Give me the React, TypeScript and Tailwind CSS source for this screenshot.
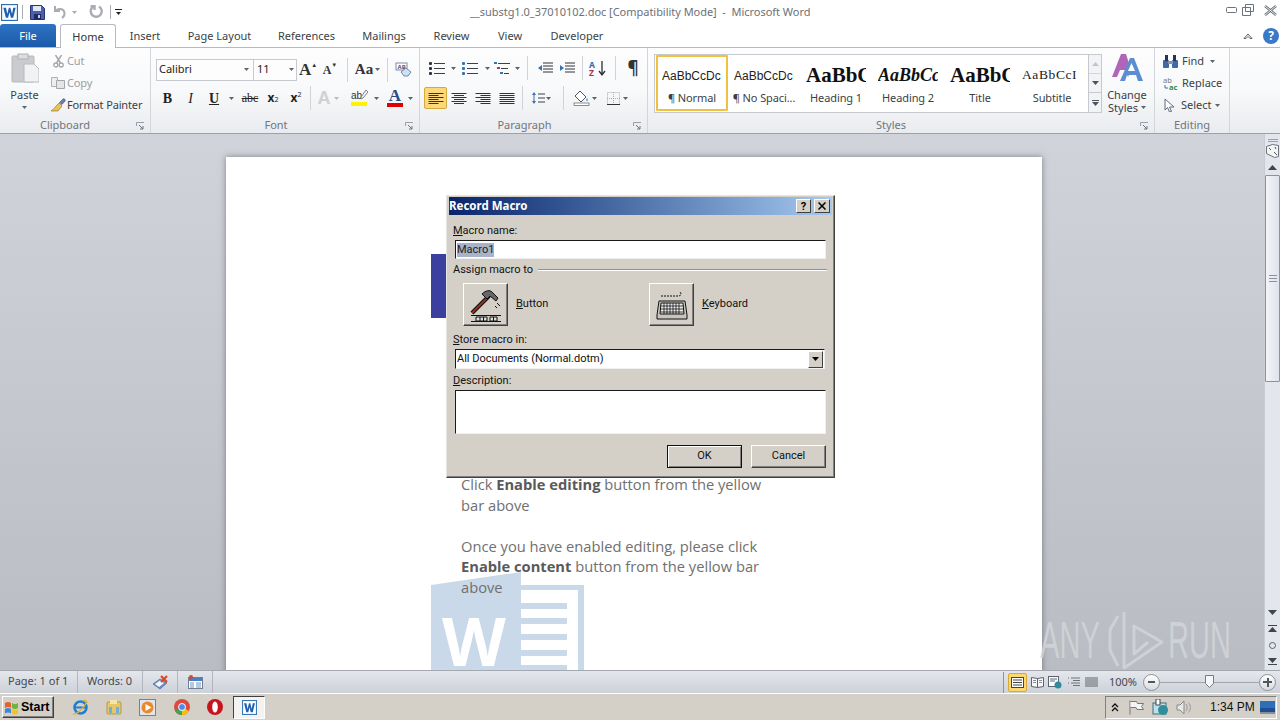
import React from "react";

const Caret = ({ c = "#5c6370" }: { c?: string }) => (
  <svg width="5" height="3" viewBox="0 0 5 3" className="shrink-0"><path d="M0 0h5L2.5 3z" fill={c} /></svg>
);

const Cell = ({ w, children, className = "" }: { w: number; children?: React.ReactNode; className?: string }) => (
  <div style={{ width: w }} className={`flex shrink-0 items-center justify-center h-[22px] ${className}`}>{children}</div>
);

const VDiv = ({ h = 24 }: { h?: number }) => <div style={{ height: h }} className="w-px bg-[#d0d3d9] shrink-0" />;

const Launcher = () => (
  <svg width="9" height="9" viewBox="0 0 9 9" className="shrink-0">
    <path d="M.5 4V.5H8" fill="none" stroke="#9aa0a8" />
    <path d="M3 3l4 4M7 4v3H4" fill="none" stroke="#6b7480" />
  </svg>
);

const Group = ({ w, label, children, labelPad = 0 }: { w: number; label: string; children: React.ReactNode; labelPad?: number }) => (
  <div style={{ width: w }} className="relative shrink-0 h-[85px] flex flex-col border-r border-[#d2d5da]">
    <div className="h-[69px] flex flex-col">{children}</div>
    <div className="h-[15px] flex items-center justify-center text-[#6f7680] text-[11px] leading-none" style={{ paddingRight: labelPad }}>
      {label}
    </div>
    <div className="absolute right-[5px] bottom-[2px]"><Launcher /></div>
  </div>
);

const Lines = ({ kind }: { kind: "l" | "c" | "r" | "j" }) => {
  const rows = [0, 1, 2, 3, 4, 5];
  return (
    <svg width="16" height="13" viewBox="0 0 16 13">
      {rows.map((i) => {
        const short = i % 2 === 1;
        const w = kind === "j" ? 15 : short ? 10 : 15;
        const x = kind === "l" || kind === "j" ? 0.5 : kind === "c" ? (16 - w) / 2 : 15.5 - w;
        return <rect key={i} x={x} y={i * 2 + 1} width={w} height="1" fill="#30343a" />;
      })}
    </svg>
  );
};

const ListIcon = ({ n }: { n?: boolean }) => (
  <svg width="16" height="14" viewBox="0 0 16 14">
    {[2, 7, 12].map((y) => (
      <g key={y}>
        <rect x="0" y={y - 1} width="3" height="3" fill={n ? "#3a6fb5" : "#2a3240"} rx="1" />
        <rect x="5" y={y} width="11" height="1" fill="#3c4048" />
      </g>
    ))}
  </svg>
);

const WordIcon = ({ s = 16 }: { s?: number }) => (
  <svg width={s} height={s} viewBox="0 0 16 16">
    <rect x=".5" y=".5" width="15" height="15" fill="#e6f0fa" stroke="#2f6fb5" />
    <rect x="2" y="2" width="12" height="12" fill="#fff" />
    <path d="M2.2 3.5h2.5l1.2 6 1.5-6h1.4l1.6 6 1.1-6h2.3l-2.3 9.5H9.3L8 7.7 6.7 13H4.6z" fill="#1f5fb0" />
  </svg>
);

const TitleBar = () => (
  <div className="h-[24px] flex items-center relative bg-white shrink-0">
    <div className="flex items-center pl-[1px] h-full">
      <WordIcon s={17} />
      <div className="w-px h-[14px] bg-[#a8acb2] ml-[4px]" />
      <svg width="15" height="15" viewBox="0 0 15 15" className="ml-[7px]">
        <path d="M.5.5h11l3 3v11H.5z" fill="#4a5fb0" stroke="#27346f" />
        <rect x="3" y="1" width="8" height="5" fill="#dfe6f5" />
        <rect x="4" y="9" width="7" height="5.5" fill="#20285f" />
        <rect x="8" y="10" width="2" height="3" fill="#c8d0e6" />
      </svg>
      <svg width="14" height="14" viewBox="0 0 14 14" className="ml-[8px]">
        <path d="M2 1v5h5M2.5 6C5 3 11 3 11.5 8c.2 2-1 4-2.500 5" fill="none" stroke="#a9adb3" strokeWidth="2" />
      </svg>
      <div className="ml-[5px]"><Caret c="#a9adb3" /></div>
      <svg width="14" height="14" viewBox="0 0 14 14" className="ml-[12px]">
        <path d="M10 1.500A5.500 5.500 0 1 1 4 1.800M1.500 1h4v4" fill="none" stroke="#a9adb3" strokeWidth="2.400" />
      </svg>
      <div className="w-px h-[14px] bg-[#a8acb2] ml-[7px]" />
      <div className="ml-[4px] flex flex-col items-center gap-[2px]">
        <div className="w-[7px] h-px bg-[#222]" />
        <Caret c="#222" />
      </div>
    </div>
    <div className="absolute left-[470px] top-[3px] text-[11px] leading-[18px] tracking-[-0.03px] text-[#6c7178] whitespace-pre">
      __substg1.0_37010102.doc [Compatibility Mode]  -  Microsoft Word
    </div>
    <div className="ml-auto pr-[3px] flex items-center gap-[5px] -mt-[4px]">
      <svg width="11" height="6" viewBox="0 0 11 6"><rect x=".5" y=".5" width="10" height="5" rx="1" fill="#fff" stroke="#6d737c" /></svg>
      <svg width="12" height="12" viewBox="0 0 12 12"><path d="M3.500.5h8v7h-8zM.5 3.500h8v8h-8z" fill="#fff" stroke="#6d737c" /></svg>
      <svg width="13" height="11" viewBox="0 0 13 11" className="ml-[5px]"><path d="M1 1l11 9M12 1L1 10" stroke="#6d737c" strokeWidth="2.500" /><path d="M1 1l11 9M12 1L1 10" stroke="#fff" strokeWidth=".8" /></svg>
    </div>
  </div>
);

const Tab = ({ w, children }: { w: number; children: string }) => (
  <div style={{ width: w }} className="shrink-0 text-center text-[11px] text-[#3b3f45] leading-[23px]">{children}</div>
);

const Tabs = () => (
  <div className="h-[23px] flex items-end bg-white shrink-0 relative">
    <div className="w-[56px] h-[23px] rounded-t-[3px] bg-gradient-to-b from-[#2f73c4] to-[#1a5aa8] text-white text-[11px] text-center leading-[23px]">File</div>
    <div className="w-[56px] h-[24px] ml-[4px] -mb-px relative z-10 bg-white border border-b-0 border-[#b6bac0] rounded-t-[3px] text-center text-[11px] text-[#333] leading-[23px]">Home</div>
    <Tab w={58}>Insert</Tab>
    <Tab w={91}>Page Layout</Tab>
    <Tab w={83}>References</Tab>
    <Tab w={72}>Mailings</Tab>
    <Tab w={63}>Review</Tab>
    <Tab w={54}>View</Tab>
    <Tab w={80}>Developer</Tab>
    <div className="ml-auto pr-[1px] flex items-center gap-[10px] h-[23px]">
      <svg width="10" height="8" viewBox="0 0 10 8"><path d="M1 6.500l4-4.500 4 4.500H7L5 4.500 3 6.500z" fill="#fff" stroke="#5a6068" /></svg>
      <div className="w-[16px] h-[16px] rounded-full bg-[#3a78c8] text-white text-[12px] font-bold leading-[16px] text-center">?</div>
    </div>
  </div>
);

const Clipboard = () => (
  <Group w={151} label="Clipboard" labelPad={20}>
    <div className="flex pt-[5px]">
      <div className="w-[49px] flex flex-col items-center">
        <svg width="28" height="30" viewBox="0 0 28 30">
          <rect x="1" y="3" width="22" height="26" rx="1" fill="#c9cbce" stroke="#b6b8bb" />
          <rect x="7" y="1" width="10" height="5" fill="#dcdde0" stroke="#b0b2b6" />
          <path d="M13 11h10l5 5v13H13z" fill="#f1f2f3" stroke="#b8babd" />
        </svg>
        <div className="text-[11px] leading-[14px] mt-[5px] text-[#3b3f45]">Paste</div>
        <div className="mt-[4px]"><Caret /></div>
      </div>
      <div className="flex flex-col -mt-[3px] text-[11px] text-[#3b3f45]">
        {[
          { t: "Cut", gray: true, i: <svg width="11" height="13" viewBox="0 0 11 13"><path d="M2.500 0l5 8M8.500 0l-5 8" stroke="#a4a6aa" strokeWidth="1.500" /><circle cx="2.800" cy="10" r="2" fill="none" stroke="#a4a6aa" strokeWidth="1.300" /><circle cx="8.200" cy="10" r="2" fill="none" stroke="#a4a6aa" strokeWidth="1.300" /></svg> },
          { t: "Copy", gray: true, i: <svg width="14" height="12" viewBox="0 0 14 12"><path d="M.5.500h6v9h-6z" fill="#eee" stroke="#aeb0b4" /><path d="M5.500 3.500h8v8h-8z" fill="#e4e5e7" stroke="#a4a6aa" /></svg> },
          { t: "Format Painter", gray: false, i: <svg width="16" height="14" viewBox="0 0 16 14"><path d="M9 5l3 3-4 5-7 0c2-1 4-4 8-8z" fill="#e8c25a" stroke="#8a6a20" strokeWidth=".6" /><path d="M9.500 4.500L13 1c1-1 3 1 2 2l-3 3.500z" fill="#6a7db0" stroke="#3a4a70" strokeWidth=".6" /></svg> },
        ].map((r) => (
          <div key={r.t} className="h-[22px] flex items-center">
            <div className="w-[18px] flex justify-center">{r.i}</div>
            <span className={`tracking-[-0.15px] ${r.gray ? "text-[#9b9ea3]" : ""}`}>{r.t}</span>
          </div>
        ))}
      </div>
    </div>
  </Group>
);

const Serif = "font-['Liberation_Serif',serif]";

const Font = () => (
  <Group w={269} label="Font" labelPad={18}>
    <div className="flex items-center pt-[11px] pl-[5px] h-[32px]">
      <div className="w-[98px] h-[22px] border border-[#c6cad0] bg-[#fdfdfd] flex items-center justify-between pl-[2px] pr-[4px] text-[11px] text-[#222]"><span>Calibri</span><Caret /></div>
      <div className="w-[43px] h-[22px] border border-l-0 border-[#c6cad0] bg-[#fdfdfd] flex items-center justify-between pl-[3px] pr-[2px] text-[11px] text-[#222]"><span>11</span><Caret /></div>
      <Cell w={22} className={`${Serif} font-bold text-[17px] text-[#333]`}>A<span className="text-[6px] -mt-[8px]">▲</span></Cell>
      <Cell w={22} className={`${Serif} font-bold text-[12px] text-[#333]`}>A<span className="text-[6px] -mt-[8px]">▼</span></Cell>
      <div className="w-[6px]" />
      <VDiv />
      <Cell w={39} className={`${Serif} font-bold text-[15px] text-[#333] gap-[2px]`}>Aa<Caret /></Cell>
      <VDiv />
      <Cell w={30}>
        <svg width="17" height="15" viewBox="0 0 17 15"><rect x="1" y="1" width="11" height="7" fill="#fff" stroke="#7d8ba0" /><text x="2.500" y="7" fontSize="6" fontWeight="700" fill="#3a5a8a">AB</text><path d="M6 10l5-4 5 4-3 4H9z" fill="#cfe0f2" stroke="#6a8ab0" /></svg>
      </Cell>
    </div>
    <div className="flex items-center pt-[6px] pl-[5px] text-[#222]">
      <Cell w={23} className={`${Serif} font-bold text-[14px]`}>B</Cell>
      <Cell w={23} className={`${Serif} italic text-[14px]`}>I</Cell>
      <Cell w={24} className={`${Serif} font-bold text-[14px] underline`}>U</Cell>
      <Cell w={10}><Caret /></Cell>
      <Cell w={28} className={`${Serif} text-[12px] line-through`}>abc</Cell>
      <Cell w={18} className="font-bold text-[12px]">x<sub className="text-[7px] font-normal">2</sub></Cell>
      <Cell w={28} className="font-bold text-[12px]">x<sup className="text-[7px] font-normal">2</sup></Cell>
      <VDiv />
      <Cell w={34} className="gap-[3px] font-bold text-[18px] text-[#cfd1d4] font-['Liberation_Sans',sans-serif]">A<Caret c="#b8bbbf" /></Cell>
      <Cell w={28} className="relative">
        <div className="flex flex-col items-start w-[16px] relative">
          <span className="text-[10px] text-[#333] leading-[11px] font-['Liberation_Sans',sans-serif]">ab</span>
          <svg className="absolute left-[9px] top-0" width="8" height="10" viewBox="0 0 8 10"><path d="M6 0l2 2-5 6-2 1 0-2z" fill="#f2f2f2" stroke="#5d6a7c" strokeWidth=".8" /></svg>
          <div className="w-[16px] h-[4px] bg-[#fff200] mt-[1px]" />
        </div>
      </Cell>
      <Cell w={6}><Caret /></Cell>
      <div className="w-[4px]" />
      <Cell w={24}>
        <div className="flex flex-col items-center">
          <span className={`${Serif} font-bold text-[17px] leading-[13px] text-[#2a4a88]`}>A</span>
          <div className="w-[16px] h-[4px] bg-[#e00000] mt-[1px]" />
        </div>
      </Cell>
      <Cell w={6}><Caret /></Cell>
    </div>
  </Group>
);

const Paragraph = () => (
  <Group w={228} label="Paragraph" labelPad={18}>
    <div className="flex items-center pt-[9px] pl-[5px] text-[#222]">
      <Cell w={24}><ListIcon /></Cell>
      <Cell w={8}><Caret /></Cell>
      <Cell w={26}><ListIcon n /></Cell>
      <Cell w={8}><Caret /></Cell>
      <Cell w={22}>
        <svg width="16" height="14" viewBox="0 0 16 14"><rect x="0" y="1" width="3" height="2" fill="#3a6fb5" /><rect x="4" y="2" width="12" height="1" fill="#3c4048" /><rect x="3" y="6" width="3" height="2" fill="#a04050" /><rect x="7" y="7" width="7" height="1" fill="#3c4048" /><rect x="6" y="11" width="3" height="2" fill="#3a6fb5" /><rect x="10" y="12" width="5" height="1" fill="#3c4048" /></svg>
      </Cell>
      <Cell w={8}><Caret /></Cell>
      <Cell w={13}><VDiv /></Cell>
      <Cell w={22}><svg width="16" height="13" viewBox="0 0 16 13"><path d="M6 1h10M6 4h10M6 7h10M6 10h10" stroke="#2f333a" /><path d="M5 3L1 6l4 3z" fill="#3a6fb5" /></svg></Cell>
      <Cell w={22}><svg width="16" height="13" viewBox="0 0 16 13"><path d="M6 1h10M6 4h10M6 7h10M6 10h10" stroke="#2f333a" /><path d="M1 3l4 3-4 3z" fill="#3a6fb5" /></svg></Cell>
      <Cell w={9}><VDiv /></Cell>
      <Cell w={22}><svg width="18" height="17" viewBox="0 0 18 17"><text x="0" y="7.500" fontSize="8.500" fontWeight="700" fill="#2b6cb5">A</text><text x="0" y="16" fontSize="8.500" fontWeight="700" fill="#b5303a">Z</text><path d="M13 1v13M10 11l3 4 3-4" fill="none" stroke="#2a2e35" strokeWidth="1.300" /></svg></Cell>
      <Cell w={12}><VDiv /></Cell>
      <Cell w={24} className="text-[17px] font-bold text-[#333]">¶</Cell>
    </div>
    <div className="flex items-center pt-[8px] pl-[4px]">
      <Cell w={23} className="bg-[#fcd87c] border border-[#d6a93a] rounded-[2px]"><Lines kind="l" /></Cell>
      <Cell w={24}><Lines kind="c" /></Cell>
      <Cell w={24}><Lines kind="r" /></Cell>
      <Cell w={23}><Lines kind="j" /></Cell>
      <Cell w={8}><VDiv /></Cell>
      <Cell w={30} className="gap-[1px]">
        <svg width="14" height="14" viewBox="0 0 14 14"><path d="M3 3v8" stroke="#3a6fb5" /><path d="M1 4l2-3 2 3zM1 10l2 3 2-3z" fill="#3a6fb5" /><path d="M7 3h7M7 7h7M7 11h7" stroke="#3c4048" /></svg><Caret />
      </Cell>
      <Cell w={14}><VDiv /></Cell>
      <Cell w={30} className="gap-[2px]">
        <svg width="17" height="16" viewBox="0 0 17 16"><path d="M7 1l6 6-5 5-6-6z" fill="#fff" stroke="#4a5568" /><path d="M12 5l2 3c1 1.500 1 3 0 3s-1-1.500 0-3" fill="#3a8fd0" /><rect x="1" y="13" width="15" height="2.500" fill="#fff" stroke="#5a6068" strokeWidth=".7" /></svg><Caret />
      </Cell>
      <Cell w={3} />
      <Cell w={28} className="gap-[3px]">
        <svg width="13" height="13" viewBox="0 0 13 13"><path d="M.5.500h12v12H.5z" fill="none" stroke="#a9adb3" strokeDasharray="1 1" /><path d="M6.500 0v13M0 6.500h13" stroke="#a9adb3" strokeDasharray="1 1" /><path d="M0 12.500h13" stroke="#333" /></svg><Caret />
      </Cell>
    </div>
  </Group>
);

const StyleItem = ({ sample, label, cls, active }: { sample: string; label: string; cls: string; active?: boolean }) => (
  <div className={`w-[72px] shrink-0 h-[56px] flex flex-col items-center overflow-hidden ${active ? "border-2 border-[#f0c040] bg-white rounded-[1px]" : "border-2 border-transparent"}`}>
    <div className={`h-[37px] w-[60px] overflow-hidden whitespace-nowrap flex items-center justify-start ${cls}`}>{sample}</div>
    <div className="text-[11px] leading-[14px] -mt-[3px] tracking-[-0.1px] text-[#3b3f45] whitespace-nowrap">{label}</div>
  </div>
);

const Styles = () => (
  <Group w={507} label="Styles" labelPad={20}>
    <div className="flex pt-[6px] pl-[6px]">
      <div className="w-[448px] h-[59px] flex border border-[#c6cad0] bg-white">
        <div className="flex flex-1 pl-[1px]">
          <StyleItem active sample="AaBbCcDc" label="¶ Normal" cls="text-[12px] text-[#222] font-['Liberation_Sans',sans-serif]" />
          <StyleItem sample="AaBbCcDc" label="¶ No Spaci..." cls="text-[12px] text-[#222] font-['Liberation_Sans',sans-serif]" />
          <StyleItem sample="AaBbCc" label="Heading 1" cls={`${Serif} font-bold text-[21px] text-[#111]`} />
          <StyleItem sample="AaBbCc" label="Heading 2" cls={`${Serif} font-bold italic text-[18px] text-[#111]`} />
          <StyleItem sample="AaBbCc" label="Title" cls={`${Serif} font-bold text-[21px] text-[#111]`} />
          <StyleItem sample="AaBbCcI" label="Subtitle" cls={`${Serif} text-[13.500px] tracking-[0.6px] text-[#222]`} />
        </div>
        <div className="w-[14px] flex flex-col border-l border-[#c6cad0] bg-[#f2f3f5] ml-auto">
          <div className="h-[19px] flex items-center justify-center border-b border-[#d3d6db]"><svg width="7" height="4" viewBox="0 0 7 4"><path d="M0 4l3.500-4L7 4z" fill="#c2c5ca" /></svg></div>
          <div className="h-[19px] flex items-center justify-center border-b border-[#c6cad0]"><svg width="7" height="4" viewBox="0 0 7 4"><path d="M0 0l3.500 4L7 0z" fill="#4c5260" /></svg></div>
          <div className="h-[19px] flex flex-col items-center justify-center gap-[1px]"><div className="w-[7px] h-px bg-[#4c5260]" /><svg width="7" height="4" viewBox="0 0 7 4"><path d="M0 0l3.500 4L7 0z" fill="#4c5260" /></svg></div>
        </div>
      </div>
      <div className="w-[50px] flex flex-col items-center text-[11px] leading-[13px] text-[#3b3f45] -mt-[1px]">
        <svg width="32" height="30" viewBox="0 0 32 30">
          <path d="M1 24L10 1h5l5 16-3 7-3-7H9l-3 7z" fill="#b065b8" />
          <path d="M9 28L19 5h4l9 23h-5l-2-6h-9l-2 6z" fill="#5b8ed0" />
          <path d="M17 18h7l-3.500-8z" fill="#fff" />
        </svg>
        <div className="mt-[5px]">Change</div>
        <div className="flex items-center gap-[3px]">Styles <Caret /></div>
      </div>
    </div>
  </Group>
);

const Editing = () => (
  <div className="w-[75px] shrink-0 h-[85px] flex flex-col border-r border-[#d2d5da]">
    <div className="h-[69px] flex flex-col pt-[2px] pl-[8px] text-[11px] text-[#3b3f45]">
      <div className="h-[22px] flex items-center gap-[4px]">
        <svg width="15" height="13" viewBox="0 0 15 13"><rect x="0" y="5" width="6" height="8" rx="1" fill="#3f68a8" /><rect x="9" y="5" width="6" height="8" rx="1" fill="#3f68a8" /><rect x="2" y="0" width="3" height="6" fill="#26344f" /><rect x="10" y="0" width="3" height="6" fill="#26344f" /><rect x="5" y="6" width="5" height="3" fill="#8a93a3" /></svg>
        <span>Find</span><span className="ml-[2px]"><Caret /></span>
      </div>
      <div className="h-[22px] flex items-center gap-[4px]">
        <svg width="15" height="15" viewBox="0 0 15 15"><text x="0" y="7" fontSize="7.500" fill="#777">ab</text><text x="6" y="14" fontSize="7.500" fontWeight="700" fill="#3c8a3c">ac</text><path d="M2 9v3h3" fill="none" stroke="#3a6fb5" /></svg>
        <span>Replace</span>
      </div>
      <div className="h-[22px] flex items-center gap-[5px]">
        <svg width="13" height="14" viewBox="0 0 13 14"><path d="M2 1l9 8H6.500l2 4.500-2 .5-2-4.500L2 12z" fill="#fff" stroke="#5f6a7a" /></svg>
        <span>Select</span><span className="ml-[-2px]"><Caret /></span>
      </div>
    </div>
    <div className="h-[15px] flex items-center justify-center text-[#6f7680] text-[11px] leading-none">Editing</div>
  </div>
);

const Ribbon = () => (
  <div className="h-[87px] flex shrink-0 bg-gradient-to-b from-[#fdfdfe] via-[#f8f9fa] to-[#e9ebef] border-t border-[#b6bac0] border-b border-b-[#9ea2a8]">
    <Clipboard />
    <Font />
    <Paragraph />
    <Styles />
    <Editing />
  </div>
);

const ScrollBar = () => (
  <div className="w-[16px] shrink-0 bg-[#e3e6ec] flex flex-col items-center border-l border-[#c9ccd2]">
    <div className="h-[3px] mt-[5px] w-[10px] border-y border-[#9ca0a6]" />
    <div className="h-[18px] flex items-center">
      <svg width="13" height="14" viewBox="0 0 13 14"><path d="M.5 2.500l6 -2 6 1v11l-4 1-8-4z" fill="#f4f5f6" stroke="#6c727a" /><path d="M3 4l2 2M8 8l3 3M9 3l1 2" stroke="#555" /></svg>
    </div>
    <div className="h-[15px] flex items-center">
      <svg width="9" height="5" viewBox="0 0 9 5"><path d="M0 5l4.500-5L9 5z" fill="#3f4650" /></svg>
    </div>
    <div className="w-[15px] h-[207px] rounded-[1px] border border-[#8e929a] bg-gradient-to-r from-[#f2f4f8] to-[#dfe3ec] flex items-center justify-center">
      <div className="w-[8px] h-[7px] border-y border-[#8e929a] flex items-center"><div className="w-full h-px bg-[#8e929a]" /></div>
    </div>
    <div className="flex-1" />
    <div className="h-[14px] flex items-center"><svg width="9" height="5" viewBox="0 0 9 5"><path d="M0 0l4.500 5L9 0z" fill="#3f4650" /></svg></div>
    <div className="h-[16px] mt-[2px] flex items-center"><svg width="9" height="8" viewBox="0 0 9 8"><path d="M0 0h9v1H0zM0 7l4.500-5L9 7z" fill="#3f4650" /></svg></div>
    <div className="h-[16px] flex items-center"><div className="w-[7px] h-[7px] rounded-full border border-[#5c6370]" /></div>
    <div className="h-[16px] mb-[1px] flex items-center"><svg width="9" height="8" viewBox="0 0 9 8"><path d="M0 7h9v1H0zM0 1l4.500 5L9 1z" fill="#3f4650" /></svg></div>
  </div>
);

const Doc = () => (
  <div className="flex-1 flex min-h-0 bg-gradient-to-b from-[#d0d3d9] to-[#b9bcc2] overflow-hidden relative">
    <div className="flex-1 pl-[226px] pt-[23px] relative">
      <div className="w-[816px] h-[600px] bg-white shadow-[0_0_6px_rgba(60,60,70,0.55)] relative">
        <svg className="absolute left-[205px] top-[415px]" width="153" height="98" viewBox="0 0 153 98">
          <path d="M90 13h63v85H90z" fill="#c9d9e9" />
          <path d="M90 18h57v80H90z" fill="#fff" />
          {[31, 46, 62, 78, 93].map((y) => <rect key={y} x="90" y={y} width="46" height="6" fill="#c9d9e9" />)}
          <path d="M0 13L90 0v98H0z" fill="#c9d9e9" />
          <text x="11" y="94" fontSize="66" fontWeight="700" fill="#fff" fontFamily="Open Sans, sans-serif">W</text>
        </svg>
        <div className="pl-[205px] pt-[97px] relative">
          <div className="w-[20px] h-[64px] bg-[#3b3f9e]" />
          <div className="ml-[30px] mt-[156px] w-[320px] text-[14.700px] leading-[20.500px] text-[#707070] font-['Open_Sans',sans-serif]">
            <p>Click <b className="text-[#5a5a5a]">Enable editing</b> button from the yellow bar above</p>
            <p className="mt-[20.500px] w-[310px]">Once you have enabled editing, please click <b className="text-[#5a5a5a]">Enable content</b> button from the yellow bar above</p>
          </div>
        </div>
      </div>
    </div>
    <ScrollBar />
    <div className="absolute left-[1040px] top-[476px] h-[60px] w-[200px] text-[#d4d6da] opacity-80 font-['Liberation_Sans',sans-serif] text-[52px] leading-[60px]">
      <span className="absolute left-0 top-0 origin-left scale-x-[0.56] whitespace-nowrap">ANY</span>
      <svg className="absolute left-[64px] top-0" width="72" height="60" viewBox="0 0 72 60" fill="none" stroke="#d4d6da" strokeWidth="3">
        <path d="M14 6L6 20v20l8 16" />
        <path d="M20 2v56L58 32 30 16v28l14-12" strokeLinejoin="round" />
      </svg>
      <span className="absolute left-[128px] top-0 origin-left scale-x-[0.56] whitespace-nowrap">RUN</span>
    </div>
  </div>
);

const StatusBar = () => (
  <div className="h-[23px] flex items-center shrink-0 bg-gradient-to-b from-[#e4e7ec] to-[#cdd1d8] border-t border-[#a4a8ae] text-[11px] text-[#44484e]">
    <div className="w-[78px] h-full pl-[8px] pb-[2px] flex items-center border-r border-[#b3b7bd]">Page: 1 of 1</div>
    <div className="w-[65px] h-full pl-[9px] pb-[2px] flex items-center border-r border-[#b3b7bd]">Words: 0</div>
    <div className="w-[35px] h-full flex items-center justify-center border-r border-[#b3b7bd]">
      <svg width="17" height="15" viewBox="0 0 17 15"><path d="M1 9l7-5 7 4-7 6z" fill="#6a8fc5" stroke="#3d5e90" strokeWidth=".6" /><path d="M3 9l5-3.500 4 2.500-5 4z" fill="#f5f5f5" /><path d="M9 1l6 6M15 1L9 7" stroke="#d8482a" strokeWidth="2.200" /></svg>
    </div>
    <div className="w-[35px] h-full flex items-center justify-center border-r border-[#b3b7bd]">
      <svg width="15" height="14" viewBox="0 0 15 14"><rect x=".5" y="2.500" width="14" height="11" fill="#fff" stroke="#6f7e93" /><rect x="1" y="3" width="13" height="3" fill="#4d7ebe" /><path d="M2 8h4M2 10h4M2 12h4M8 8h5M8 10h5M8 12h5" stroke="#6d92c5" /><circle cx="3" cy="2" r="2" fill="#d8482a" /></svg>
    </div>
    <div className="ml-auto flex items-center h-full">
      <div className="w-px h-[21px] bg-[#8f949b] mr-[4px]" />
      <div className="w-[19px] h-[19px] bg-[#fbd870] border border-[#d6a93a] rounded-[2px] flex items-center justify-center">
        <svg width="13" height="11" viewBox="0 0 13 11"><rect x=".5" y=".5" width="12" height="10" fill="#fff" stroke="#444" /><path d="M2 3h9M2 5.500h9M2 8h9" stroke="#444" /></svg>
      </div>
      <div className="w-[18px] flex justify-center ml-[1px]"><svg width="13" height="12" viewBox="0 0 13 12"><path d="M.5 1.500l6 1 6-1v9l-6 1-6-1zM6.500 2.500v9" fill="#f7f7f7" stroke="#5c6370" /><path d="M2 4.500h3M2 6.500h3M8 4.500h3M8 6.500h3" stroke="#8a9099" /></svg></div>
      <div className="w-[18px] flex justify-center"><svg width="14" height="13" viewBox="0 0 14 13"><rect x=".5" y=".5" width="10" height="10" fill="#fff" stroke="#5c6370" /><path d="M2 3h7M2 5h5" stroke="#5c6370" /><circle cx="10" cy="9" r="3.500" fill="#2f8a9c" /></svg></div>
      <div className="w-[18px] flex justify-center"><svg width="13" height="11" viewBox="0 0 13 11"><path d="M4 1h9M6 3.500h7M4 6h9M6 8.500h7M1 1h1M1 6h1" stroke="#6c727a" /></svg></div>
      <div className="w-[19px] flex justify-center"><svg width="13" height="11" viewBox="0 0 13 11"><path d="M0 1h13M0 3h13M0 5h13M0 7h13M0 9h13" stroke="#5f656d" /></svg></div>
      <div className="w-[39px] pl-[5px] text-center">100%</div>
      <div className="w-[17px] h-[17px] ml-[3px] rounded-full border border-[#8e929a] bg-gradient-to-b from-white to-[#d7dae0] flex items-center justify-center"><div className="w-[7px] h-[2px] bg-[#555]" /></div>
      <div className="w-[99px] relative flex items-center h-full">
        <div className="w-full h-px bg-[#a2a6ac]" />
        <svg className="absolute left-[45px] top-[4px]" width="9" height="13" viewBox="0 0 9 13"><path d="M.5.500h8v8l-4 4-4-4z" fill="#f6f7f9" stroke="#777c84" /></svg>
      </div>
      <div className="w-[17px] h-[17px] mr-[4px] rounded-full border border-[#8e929a] bg-gradient-to-b from-white to-[#d7dae0] flex items-center justify-center relative">
        <div className="w-[9px] h-[2px] bg-[#555]" /><div className="absolute w-[2px] h-[9px] bg-[#555]" />
      </div>
    </div>
  </div>
);

const Taskbar = () => (
  <div className="h-[27px] flex items-center shrink-0 bg-[#d4d0c8] border-t border-white relative font-['Liberation_Sans',sans-serif]">
    <div className="ml-[2px] w-[52px] h-[22px] flex items-center pl-[1px] gap-[1px] bg-[#d4d0c8] border border-t-white border-l-white border-r-[#404040] border-b-[#404040] shadow-[inset_-1px_-1px_0_#808080] text-[12.500px] font-bold text-black">
      <svg width="16" height="15" viewBox="0 0 16 15"><path d="M1 3c2-1.500 4-1.500 6 0v5C5 6.500 3 6.500 1 8z" fill="#e8602a" /><path d="M8 3c2 1.500 4 1.500 6 0v5c-2 1.500-4 1.500-6 0z" fill="#6cb33f" /><path d="M1 9c2-1.500 4-1.500 6 0v4.500c-2-1.500-4-1.500-6 0z" fill="#3f86d6" /><path d="M8 9c2 1.500 4 1.500 6 0v4.500c-2 1.500-4 1.500-6 0z" fill="#f5c02c" /></svg>
      Start
    </div>
    <div className="flex items-center ml-[17px]">
      <div className="w-[18px] flex justify-center">
        <svg width="17" height="17" viewBox="0 0 17 17"><circle cx="8.500" cy="8.500" r="6" fill="none" stroke="#1f7fd0" strokeWidth="2.500" /><path d="M2.500 8.500h12" stroke="#1f7fd0" strokeWidth="2" /><path d="M1 15c3 1 10-5 14-12-1-2-3-2-4-1" fill="none" stroke="#e8b030" strokeWidth="1.500" /></svg>
      </div>
      <div className="w-[16px] ml-[17px] flex justify-center">
        <svg width="16" height="16" viewBox="0 0 16 16"><rect x="1" y="3" width="14" height="12" rx="1" fill="#e5c76a" stroke="#b59a45" /><rect x="4" y="1" width="7" height="4" fill="#f4e6a8" /><rect x="3" y="8" width="3" height="6" fill="#6fb0d8" /><rect x="10" y="8" width="3" height="6" fill="#6fb0d8" /></svg>
      </div>
      <div className="w-[17px] ml-[17px] flex justify-center">
        <svg width="17" height="17" viewBox="0 0 17 17"><rect x=".5" y=".5" width="16" height="16" fill="#dfe6f0" stroke="#5b86c0" /><circle cx="8.500" cy="8.500" r="6" fill="#e9892a" /><path d="M6.500 5l6 3.500-6 3.500z" fill="#fff" /></svg>
      </div>
      <div className="w-[17px] ml-[17px] flex justify-center">
        <svg width="16" height="16" viewBox="0 0 16 16"><circle cx="8" cy="8" r="8" fill="#dd4b3e" /><path d="M8 8L1 12a8 8 0 0 0 7 4z" fill="#3aa757" /><path d="M8 8l7 4a8 8 0 0 1-7 4z" fill="#f4c20d" /><circle cx="8" cy="8" r="3.500" fill="#4a8bf0" stroke="#fff" /></svg>
      </div>
      <div className="w-[16px] ml-[17px] flex justify-center">
        <svg width="16" height="16" viewBox="0 0 16 16"><circle cx="8" cy="8" r="8" fill="#c8141c" /><ellipse cx="8" cy="8" rx="2.800" ry="5.500" fill="#fff" /></svg>
      </div>
      <div className="ml-[10px] w-[32px] h-[23px] bg-[#f4f3f0] border border-t-[#404040] border-l-[#404040] border-r-white border-b-white flex items-center justify-center">
        <WordIcon s={15} />
      </div>
    </div>
    <div className="ml-auto mr-[3px] w-[172px] h-[23px] flex items-center border border-t-[#808080] border-l-[#808080] border-r-white border-b-white text-[12px] text-[#111]">
      <svg width="8" height="9" viewBox="0 0 8 9" className="ml-[5px] shrink-0"><path d="M1 4l3-3 3 3M1 8l3-3 3 3" fill="none" stroke="#111" strokeWidth="1.300" /></svg>
      <svg width="15" height="15" viewBox="0 0 15 15" className="ml-[10px] shrink-0"><path d="M1 .5v14" stroke="#777" /><path d="M1.500 1.500h6l1 2h6l-2 3 2 3H8l-1-2H1.500" fill="#f4f4f4" stroke="#777" /></svg>
      <svg width="17" height="17" viewBox="0 0 17 17" className="ml-[8px] shrink-0"><rect x="1" y="4" width="13" height="11" fill="#bfe0ea" stroke="#3f6d78" /><rect x="4" y="0" width="4" height="6" fill="#fff" stroke="#444" /><circle cx="11" cy="11" r="5" fill="#2f8f9c" /></svg>
      <svg width="16" height="15" viewBox="0 0 16 15" className="ml-[7px] shrink-0"><path d="M1 5h3l4-4v13l-4-4H1z" fill="#e7e7e7" stroke="#888" /><path d="M10 4c1.500 2 1.500 5 0 7M12.500 2.500c2.500 3 2.500 7 0 10" fill="none" stroke="#999" /></svg>
      <span className="ml-[18px] whitespace-nowrap">1:34 PM</span>
      <svg width="15" height="13" viewBox="0 0 15 13" className="ml-auto mr-[1px] shrink-0"><rect x="0" y="0" width="15" height="11" fill="#2f6fb8" /><rect x="0" y="7" width="15" height="4" fill="#1f4f90" /><rect x="0" y="11" width="15" height="2" fill="#8a8f96" /></svg>
    </div>
  </div>
);

const Dialog = () => {
  const u = (t: string) => <span className="underline">{t}</span>;
  return (
    <div className="absolute left-[446px] top-[195px] w-[389px] h-[283px] bg-[#d4d0c8] border border-t-[#e8e6e0] border-l-[#e8e6e0] border-r-[#404040] border-b-[#404040] shadow-[inset_-1px_-1px_0_#808080] p-[1px] text-[11px] text-[#111] font-['Roboto',sans-serif]">
      <div className="h-[18px] mx-[1px] flex items-center bg-gradient-to-r from-[#0a246a] to-[#a6caf0] pr-[2px]">
        <span className="text-white font-bold text-[11.500px] leading-none font-['Noto_Sans',sans-serif]">Record Macro</span>
        <div className="ml-auto w-[15px] h-[14px] bg-[#d4d0c8] border border-t-white border-l-white border-r-[#404040] border-b-[#404040] flex items-center justify-center text-[11px] font-bold text-black leading-none">?</div>
        <div className="ml-[3px] w-[16px] h-[14px] bg-[#d4d0c8] border border-t-white border-l-white border-r-[#404040] border-b-[#404040] flex items-center justify-center">
          <svg width="8" height="8" viewBox="0 0 8 8"><path d="M.5.5l7 7M7.500.5l-7 7" stroke="#000" strokeWidth="1.500" /></svg>
        </div>
      </div>
      <div className="pl-[5px] pr-[6px]">
        <div className="h-[15px] mt-[8px] leading-[15px]">{u("M")}acro name:</div>
        <div className="mt-[2px] ml-[2px] w-[371px] h-[19px] bg-white border border-t-[#1a1a1a] border-l-[#1a1a1a] border-b-[#f0f0f0] border-r-[#f0f0f0] flex items-center pl-[1px]">
          <span className="bg-[#a9b2c8] leading-[14px] text-[#222]">Macro1</span>
        </div>
        <div className="flex items-center h-[15px] mt-[3px]">
          <span className="leading-[15px]">Assign macro to</span>
          <div className="flex-1 ml-[5px] h-[2px] border-t border-b border-t-[#909090] border-b-white" />
        </div>
        <div className="flex items-center mt-[6px] ml-[10px]">
          <div className="w-[45px] h-[43px] bg-[#d4d0c8] border border-t-white border-l-white border-r-[#404040] border-b-[#404040] flex items-center justify-center shadow-[inset_-1px_-1px_0_#808080]">
            <svg width="34" height="34" viewBox="0 0 34 34">
              <path d="M3 25L20 8" stroke="#111" strokeWidth="4" />
              <path d="M3 25L20 8" stroke="#a03020" strokeWidth="1.800" />
              <path d="M13 6c4-4 8-4 10-2l6 6-2 3-6-5-3 3z" fill="#666" stroke="#111" />
              <path d="M28 15l3 3M26 18l2 2" stroke="#111" />
              <rect x="2" y="27" width="30" height="1" fill="#111" />
              <path d="M7 29h11v4H7zM21 29h7v4h-7z" fill="#ddd" stroke="#111" />
              <path d="M11 29v4M14.500 29v4M24.500 29v4" stroke="#111" />
              <rect x="2" y="33" width="30" height="1" fill="#111" />
            </svg>
          </div>
          <span className="ml-[8px] w-[133px]">{u("B")}utton</span>
          <div className="w-[45px] h-[43px] bg-[#d4d0c8] border border-t-white border-l-white border-r-[#404040] border-b-[#404040] flex items-center justify-center shadow-[inset_-1px_-1px_0_#808080]">
            <svg width="32" height="30" viewBox="0 0 32 30">
              <path d="M5 6h17c3 0 4-2 2-4" fill="none" stroke="#111" strokeDasharray="2 1" />
              <path d="M3 11h26l2 14v4H1v-4z" fill="#c9c5bd" stroke="#111" />
              <path d="M5 13h22l1 11H4z" fill="#eee" stroke="#111" />
              <path d="M5 16h22M4.500 19h23M4.500 22h23M8 13v11M11 13v11M14 13v11M17 13v11M20 13v11M23 13v11" stroke="#111" strokeWidth=".8" />
            </svg>
          </div>
          <span className="ml-[8px]">{u("K")}eyboard</span>
        </div>
        <div className="h-[15px] mt-[6px] leading-[15px]">{u("S")}tore macro in:</div>
        <div className="mt-[2px] ml-[2px] w-[370px] h-[20px] bg-white border border-t-[#1a1a1a] border-l-[#1a1a1a] border-b-[#f0f0f0] border-r-[#f0f0f0] flex items-center pl-[1px] pr-[1px]">
          <span>All Documents (Normal.dotm)</span>
          <div className="ml-auto w-[15px] h-[17px] bg-[#d4d0c8] border border-t-white border-l-white border-r-[#404040] border-b-[#404040] flex items-center justify-center">
            <svg width="7" height="4" viewBox="0 0 7 4"><path d="M0 0h7L3.500 4z" fill="#000" /></svg>
          </div>
        </div>
        <div className="h-[15px] mt-[4px] leading-[15px]">{u("D")}escription:</div>
        <div className="mt-[2px] ml-[2px] w-[371px] h-[44px] bg-white border border-t-[#1a1a1a] border-l-[#1a1a1a] border-b-[#f0f0f0] border-r-[#f0f0f0]" />
        <div className="flex justify-end gap-[9px] mt-[11px] pr-[1px]">
          <div className="w-[75px] h-[23px] bg-[#d4d0c8] border border-[#111] shadow-[inset_1px_1px_0_#fff,inset_-1px_-1px_0_#808080] flex items-center justify-center">OK</div>
          <div className="w-[75px] h-[23px] bg-[#d4d0c8] border border-t-white border-l-white border-r-[#404040] border-b-[#404040] shadow-[inset_-1px_-1px_0_#808080] flex items-center justify-center">Cancel</div>
        </div>
      </div>
    </div>
  );
};

export default function App() {
  return (
    <div className="w-[1280px] h-[720px] relative overflow-hidden flex flex-col bg-white font-['Noto_Sans',sans-serif]">
      <TitleBar />
      <Tabs />
      <Ribbon />
      <Doc />
      <StatusBar />
      <Taskbar />
      <Dialog />
    </div>
  );
}
